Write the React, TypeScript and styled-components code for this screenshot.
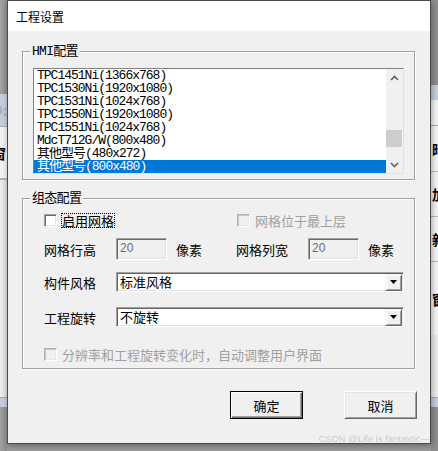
import React from 'react'
import styled, { createGlobalStyle } from 'styled-components'

const GlobalStyle = createGlobalStyle`
  html, body {
    margin: 0;
    padding: 0;
    background: #9c9c9c;
  }
  body {
    font-family: "Noto Sans CJK SC", "Liberation Sans", sans-serif;
    font-size: 13px;
    color: #000;
  }
`

interface IBand {
  h: number
  bg: string
  text?: string
  color?: string
}

const LEFT_BANDS: IBand[] = [
  { h: 94, bg: 'linear-gradient(90deg, #a4a4a4, #8e8e8e)' },
  { h: 32, bg: '#c6cedb', text: 'O:', color: '#a8b0bc' },
  { h: 1, bg: '#a8a8a8' },
  { h: 51, bg: '#f2f2f2', text: '窗', color: '#000' },
  { h: 2, bg: '#b4b4b4' },
  { h: 217, bg: 'linear-gradient(90deg, #eeeeee, #dcdcdc)' },
  { h: 1, bg: '#a8a8a8' },
  { h: 9, bg: '#c6cedb' },
  { h: 44, bg: 'linear-gradient(90deg, #a0a0a0, #8c8c8c)' },
]

const RIGHT_BANDS: IBand[] = [
  { h: 85, bg: '#8e8e8e' },
  { h: 15, bg: '#c6cedb' },
  { h: 25, bg: '#f4f4f4' },
  { h: 1, bg: '#a8a8a8' },
  { h: 45, bg: '#f4f4f4', text: '暗' },
  { h: 1, bg: '#b8b8b8' },
  { h: 44, bg: '#f4f4f4', text: '加' },
  { h: 1, bg: '#b8b8b8' },
  { h: 44, bg: '#f4f4f4', text: '新' },
  { h: 1, bg: '#b8b8b8' },
  { h: 73, bg: '#f4f4f4', text: '窗' },
  { h: 62, bg: '#ececec' },
  { h: 1, bg: '#a8a8a8' },
  { h: 9, bg: '#c6cedb' },
  { h: 44, bg: '#8e8e8e' },
]

const HMI_MODELS: { label: string, selected?: boolean }[] = [
  { label: 'TPC1451Ni(1366x768)' },
  { label: 'TPC1530Ni(1920x1080)' },
  { label: 'TPC1531Ni(1024x768)' },
  { label: 'TPC1550Ni(1920x1080)' },
  { label: 'TPC1551Ni(1024x768)' },
  { label: 'MdcT712G/W(800x480)' },
  { label: '其他型号(480x272)' },
  { label: '其他型号(800x480)', selected: true },
]

const Screen = styled.div`
  position: relative;
  width: 438px;
  height: 451px;
  display: grid;
  grid-template-columns: 7px 424px 7px;
  overflow: hidden;
  background: #9c9c9c;
`

const BackStrip = styled.div`
  display: flex;
  flex-direction: column;
  overflow: hidden;
`

const Band = styled.div<{ $h: number, $bg: string, $color?: string }>`
  flex: 0 0 ${p => p.$h}px;
  width: 100%;
  background: ${p => p.$bg};
  display: flex;
  align-items: center;
  overflow: hidden;
  font-size: 14px;
  font-weight: bold;
  color: ${p => p.$color || '#000'};
  white-space: nowrap;
`

const BandText = styled.span<{ $side: 'left' | 'right' }>`
  flex: 0 0 auto;
  margin-left: ${p => p.$side === 'left' ? -8 : 1}px;
`

const Dialog = styled.div`
  position: relative;
  z-index: 1;
  height: 444px;
  box-sizing: border-box;
  border: 1px solid #4a4a4a;
  background: #f0f0f0;
  display: flex;
  flex-direction: column;
  box-shadow: 1px 2px 6px rgba(0, 0, 0, 0.35);
`

const TitleBar = styled.div`
  height: 30px;
  background: #fff;
  display: flex;
  align-items: center;
  padding-left: 8px;
  font-size: 12px;
`

const DialogBody = styled.div`
  display: flex;
  flex-direction: column;
  padding: 20px 15px 0 14px;
`

const GroupBox = styled.div<{ $pad: string, $mt?: number }>`
  position: relative;
  border: 1px solid #a0a0a0;
  box-shadow: inset 1px 1px 0 #fff, 1px 1px 0 #fff;
  padding: ${p => p.$pad};
  margin-top: ${p => p.$mt || 0}px;
`

const GroupTitle = styled.span`
  position: absolute;
  top: -8px;
  left: 7px;
  padding: 0 2px;
  background: #f0f0f0;
  font-family: "Liberation Mono", "Noto Sans CJK SC", monospace;
  font-size: 13px;
  line-height: 15px;
  letter-spacing: -0.7px;
`

const ListBox = styled.div`
  height: 106px;
  box-sizing: border-box;
  display: flex;
  background: #fff;
  border: 1px solid;
  border-color: #828282 #e3e3e3 #e3e3e3 #828282;
`

const ListItems = styled.div`
  flex: 1;
  display: flex;
  flex-direction: column;
`

const ListItem = styled.div<{ $selected?: boolean }>`
  height: 13px;
  line-height: 13px;
  overflow: hidden;
  padding-left: 3px;
  font-family: "Liberation Mono", "Noto Sans CJK SC", monospace;
  font-size: 13px;
  letter-spacing: -1px;
  white-space: nowrap;
  background: ${p => p.$selected ? '#0078d7' : 'transparent'};
  color: ${p => p.$selected ? '#fff' : '#000'};
`

const ScrollBar = styled.div`
  width: 17px;
  display: flex;
  flex-direction: column;
  background: #f0f0f0;
`

const ScrollButton = styled.div`
  height: 17px;
  display: flex;
  align-items: center;
  justify-content: center;
`

const ScrollTrack = styled.div`
  flex: 1;
  padding-top: 44px;
`

const ScrollThumb = styled.div`
  height: 17px;
  margin: 0 1px 0 0;
  background: #cdcdcd;
`

const FormRow = styled.div<{ $h: number, $mt?: number }>`
  display: flex;
  align-items: center;
  height: ${p => p.$h}px;
  margin-top: ${p => p.$mt || 0}px;
`

const CheckItem = styled.div<{ $w?: number }>`
  display: flex;
  align-items: center;
  flex-shrink: 0;
  ${p => p.$w ? `width: ${p.$w}px;` : ''}
`

const CheckBox = styled.span<{ $disabled?: boolean }>`
  width: 13px;
  height: 13px;
  flex-shrink: 0;
  box-sizing: border-box;
  border: 1px solid;
  border-color: ${p => p.$disabled ? '#b0b0b0 #fff #fff #b0b0b0' : '#a0a0a0 #fff #fff #a0a0a0'};
  box-shadow: ${p => p.$disabled
    ? 'inset 1px 1px 0 #c8c8c8, inset -1px -1px 0 #e8e8e8'
    : 'inset 1px 1px 0 #696969, inset -1px -1px 0 #e3e3e3'};
  background: ${p => p.$disabled ? '#f0f0f0' : '#fff'};
`

const CheckLabel = styled.span<{ $focus?: boolean, $disabled?: boolean }>`
  margin-left: 4px;
  border: 1px dotted ${p => p.$focus ? '#000' : 'transparent'};
  line-height: 13px;
  font-size: 13px;
  white-space: nowrap;
  color: ${p => p.$disabled ? '#a0a0a0' : '#000'};
`

const FieldLabel = styled.span<{ $w: number }>`
  width: ${p => p.$w}px;
  flex: 0 0 auto;
  font-size: 13px;
  white-space: nowrap;
`

const NumberInput = styled.div`
  width: 51px;
  height: 22px;
  flex-shrink: 0;
  box-sizing: border-box;
  border: 1px solid;
  border-color: #a0a0a0 #fff #fff #a0a0a0;
  box-shadow: inset 1px 1px 0 #696969, inset -1px -1px 0 #e3e3e3;
  background: #f0f0f0;
  color: #6d6d6d;
  font-family: "Liberation Sans", sans-serif;
  font-size: 12px;
  line-height: 18px;
  padding-left: 3px;
`

const Unit = styled.span<{ $w?: number }>`
  margin-left: 9px;
  flex-shrink: 0;
  ${p => p.$w ? `width: ${p.$w}px;` : ''}
  font-size: 13px;
  white-space: nowrap;
`

const Combo = styled.div`
  flex: 1;
  height: 20px;
  box-sizing: border-box;
  display: flex;
  align-items: center;
  border: 1px solid;
  border-color: #a0a0a0 #fff #fff #a0a0a0;
  box-shadow: inset 1px 1px 0 #646464, inset -1px -1px 0 #e3e3e3;
  background: #fff;
  padding: 1px 1px 1px 3px;
`

const ComboText = styled.span`
  flex: 1;
  font-size: 13px;
  line-height: 16px;
`

const DropButton = styled.span`
  width: 17px;
  height: 17px;
  box-sizing: border-box;
  display: flex;
  align-items: center;
  justify-content: center;
  background: #f0f0f0;
  border: 1px solid;
  border-color: #f0f0f0 #696969 #696969 #f0f0f0;
  box-shadow: inset 1px 1px 0 #fff, inset -1px -1px 0 #a0a0a0;
`

const ButtonRow = styled.div`
  display: flex;
  justify-content: flex-end;
  gap: 41px;
  margin: 22px -2px 0 0;
`

const DialogButton = styled.button<{ $default?: boolean }>`
  width: 73px;
  height: 28px;
  box-sizing: border-box;
  padding: 0;
  background: #f0f0f0;
  font-family: "Noto Sans CJK SC", sans-serif;
  font-size: 13px;
  color: #000;
  border: 1px solid;
  border-color: ${p => p.$default ? '#000' : '#fff #696969 #696969 #fff'};
  box-shadow: ${p => p.$default
    ? 'inset 1px 1px 0 #fff, inset -1px -1px 0 #696969, inset -2px -2px 0 #a0a0a0'
    : 'inset 1px 1px 0 #e3e3e3, inset -1px -1px 0 #a0a0a0'};
`

const Watermark = styled.span`
  position: absolute;
  right: 0;
  bottom: -2px;
  font-family: "Liberation Sans", sans-serif;
  font-size: 9.5px;
  line-height: 12px;
  color: rgba(150, 150, 150, 0.45);
  white-space: nowrap;
`

const Chevron = ({ up }: { up?: boolean }) => (
  <svg width="9" height="6" viewBox="0 0 9 6">
    <polyline
      points={up ? '1,5 4.5,1.5 8,5' : '1,1 4.5,4.5 8,1'}
      fill="none"
      stroke="#606060"
      strokeWidth="1.6"
    />
  </svg>
)

const DownTriangle = () => (
  <svg width="7" height="4" viewBox="0 0 7 4">
    <polygon points="0,0 7,0 3.5,4" fill="#000" />
  </svg>
)

const Strip = ({ side, bands }: { side: 'left' | 'right', bands: IBand[] }) => (
  <BackStrip>
    {bands.map((band, i) =>
      <Band key={`band-${side}-${i}`} $h={band.h} $bg={band.bg} $color={band.color}>
        {band.text && <BandText $side={side}>{band.text}</BandText>}
      </Band>
    )}
  </BackStrip>
)

export default function App() {
  return (
    <Screen>
      <GlobalStyle />
      <Strip side="left" bands={LEFT_BANDS} />
      <Dialog>
        <TitleBar>工程设置</TitleBar>
        <DialogBody>
          <GroupBox $pad="16px 10px 5px 10px">
            <GroupTitle>HMI配置</GroupTitle>
            <ListBox>
              <ListItems>
                {HMI_MODELS.map(model =>
                  <ListItem key={model.label + (model.selected ? '-sel' : '')} $selected={model.selected}>
                    {model.label}
                  </ListItem>
                )}
              </ListItems>
              <ScrollBar>
                <ScrollButton><Chevron up /></ScrollButton>
                <ScrollTrack><ScrollThumb /></ScrollTrack>
                <ScrollButton><Chevron /></ScrollButton>
              </ScrollBar>
            </ListBox>
          </GroupBox>

          <GroupBox $pad="14px 10px 7px 21px" $mt={18}>
            <GroupTitle>组态配置</GroupTitle>
            <FormRow $h={15}>
              <CheckItem $w={193}>
                <CheckBox />
                <CheckLabel $focus>启用网格</CheckLabel>
              </CheckItem>
              <CheckItem>
                <CheckBox $disabled />
                <CheckLabel $disabled>网格位于最上层</CheckLabel>
              </CheckItem>
            </FormRow>
            <FormRow $h={22} $mt={10}>
              <FieldLabel $w={72}>网格行高</FieldLabel>
              <NumberInput>20</NumberInput>
              <Unit $w={60}>像素</Unit>
              <FieldLabel $w={72}>网格列宽</FieldLabel>
              <NumberInput>20</NumberInput>
              <Unit>像素</Unit>
            </FormRow>
            <FormRow $h={20} $mt={12}>
              <FieldLabel $w={72}>构件风格</FieldLabel>
              <Combo>
                <ComboText>标准风格</ComboText>
                <DropButton><DownTriangle /></DropButton>
              </Combo>
            </FormRow>
            <FormRow $h={20} $mt={15}>
              <FieldLabel $w={72}>工程旋转</FieldLabel>
              <Combo>
                <ComboText>不旋转</ComboText>
                <DropButton><DownTriangle /></DropButton>
              </Combo>
            </FormRow>
            <FormRow $h={13} $mt={21}>
              <CheckItem>
                <CheckBox $disabled />
                <CheckLabel $disabled>分辨率和工程旋转变化时，自动调整用户界面</CheckLabel>
              </CheckItem>
            </FormRow>
          </GroupBox>

          <ButtonRow>
            <DialogButton $default>确定</DialogButton>
            <DialogButton>取消</DialogButton>
          </ButtonRow>
        </DialogBody>
        <Watermark>CSDN @Life is fantastic—</Watermark>
      </Dialog>
      <Strip side="right" bands={RIGHT_BANDS} />
    </Screen>
  )
}
